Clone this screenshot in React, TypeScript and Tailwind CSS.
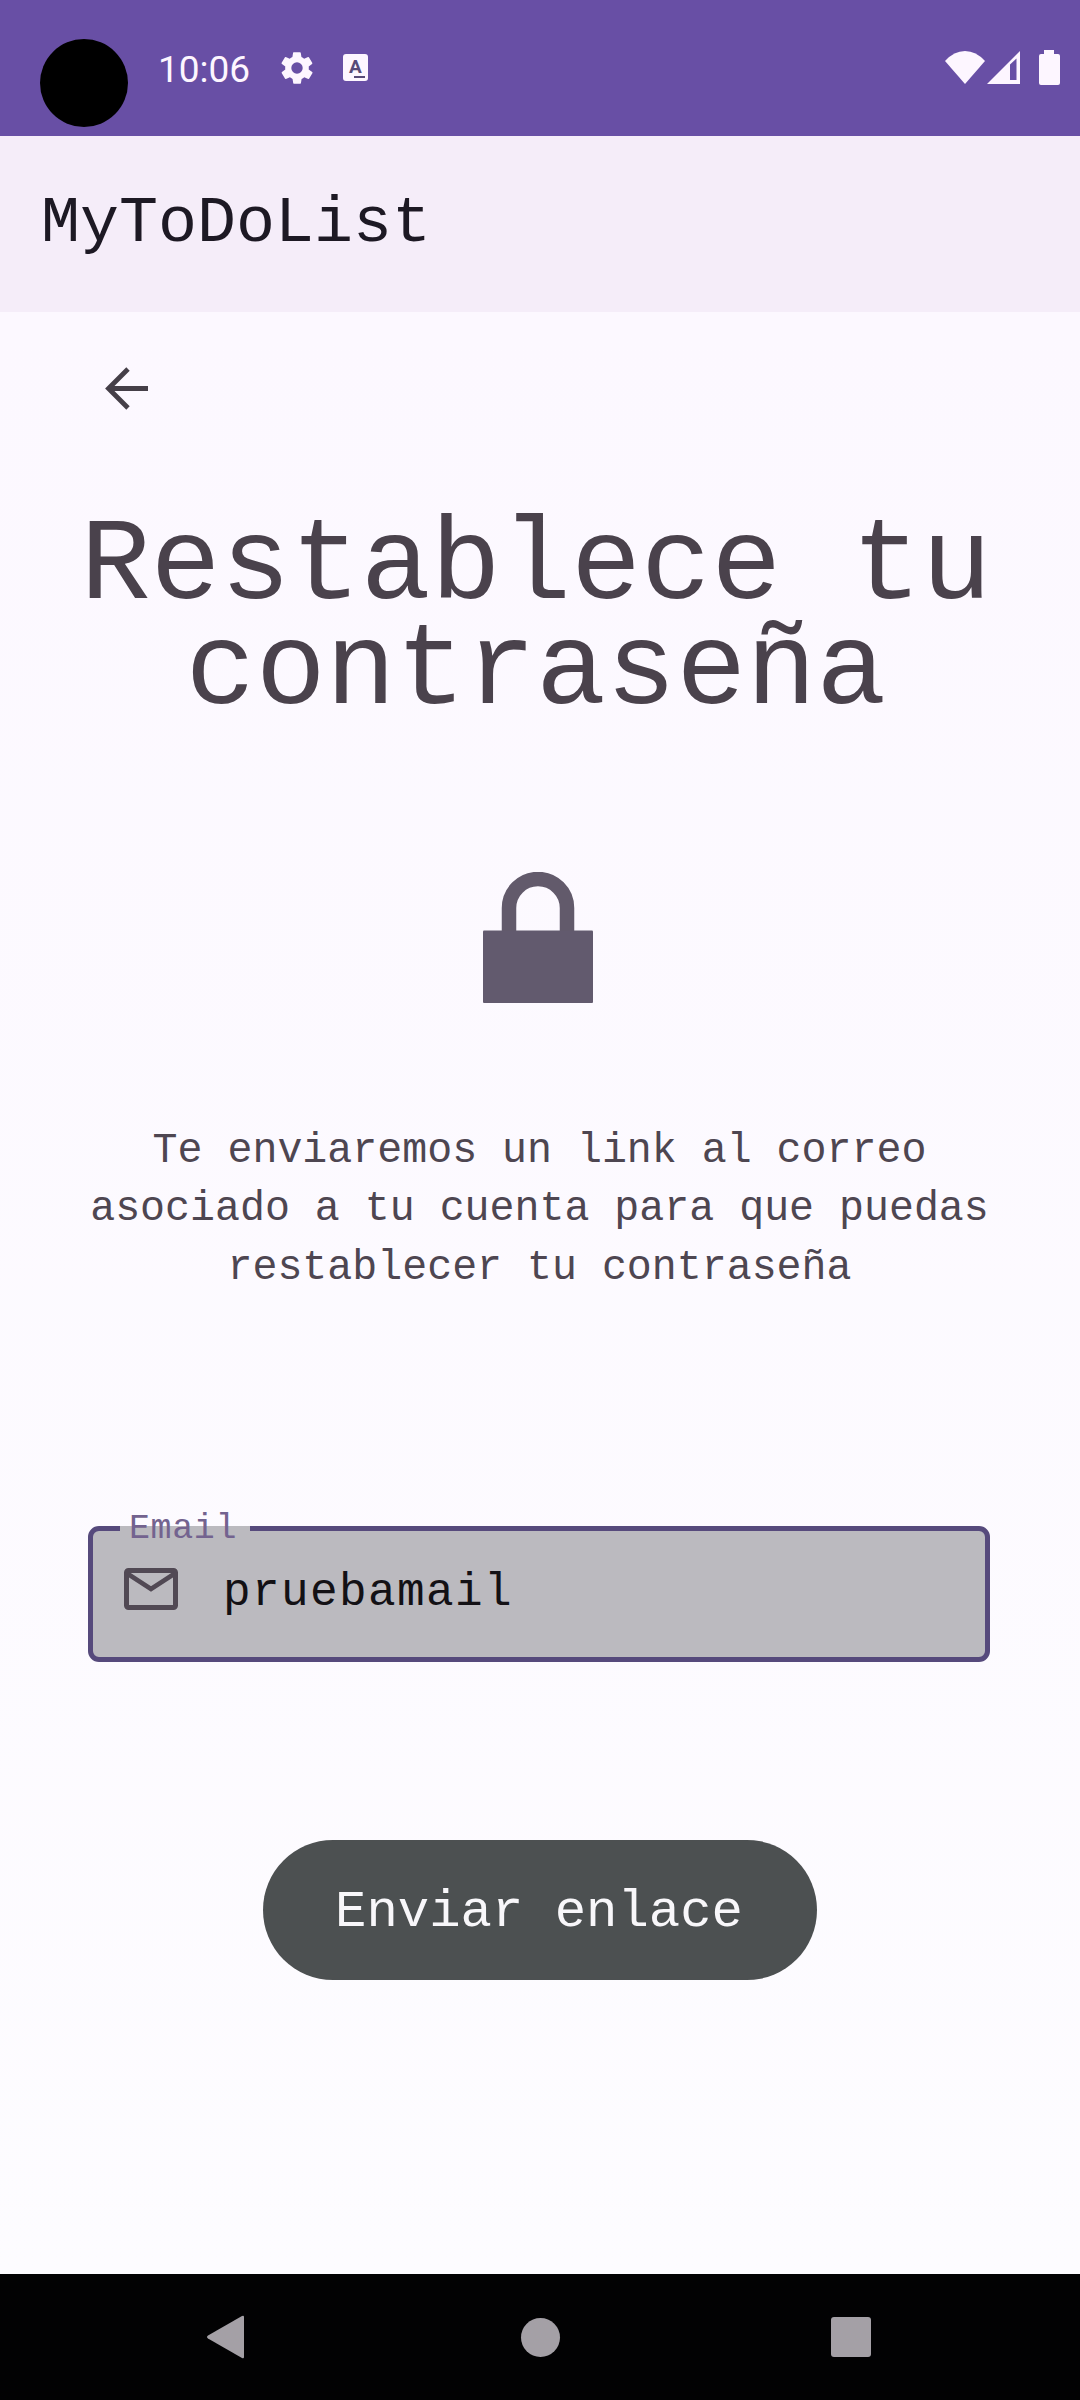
import React from "react";

function StatusBar() {
  return (
    <header className="flex h-[136px] shrink-0 items-start bg-[#684fa5] pl-10 pr-5 text-[#fdf6ff]">
      <span className="mt-[39px] h-[88px] w-[88px] rounded-full bg-black" />
      <span className="ml-[30px] mt-[50px] w-[94px] font-['Roboto'] text-[37px] leading-[40px]">10:06</span>
      <svg className="ml-[26px] mt-[49px] h-[38px] w-[38px]" viewBox="0 0 24 24" fill="currentColor">
        <path d="M19.4 13a7.5 7.5 0 0 0 0-2l2.1-1.6a.5.5 0 0 0 .1-.7l-2-3.4a.5.5 0 0 0-.6-.2l-2.500 1a7.300 7.300 0 0 0-1.700-1l-.4-2.600a.5.5 0 0 0-.5-.5h-4a.5.5 0 0 0-.4.5l-.4 2.600a7.700 7.700 0 0 0-1.700 1l-2.500-1a.5.5 0 0 0-.6.2l-2 3.400a.5.5 0 0 0 .2.700L4.600 11a6.300 6.300 0 0 0 0 2l-2.100 1.600a.5.5 0 0 0-.1.700l2 3.400c.1.200.3.300.6.200l2.500-1c.500.400 1.100.700 1.700 1l.4 2.600c0 .300.200.500.400.500h4c.300 0 .500-.200.500-.500l.4-2.600a7 7 0 0 0 1.700-1l2.500 1c.200.100.500 0 .600-.200l2-3.400a.5.5 0 0 0-.1-.700L19.400 13zM12 15.600a3.600 3.600 0 1 1 0-7.200 3.600 3.600 0 0 1 0 7.200z" />
      </svg>
      <span className="ml-[27px] mt-[54px] flex h-[27px] w-[25px] flex-col items-center rounded-[3px] bg-[#fdf6ff] font-['Roboto'] text-[19px] font-bold leading-[25px] text-[#574a78]">
        A
        <span className="-mt-[3px] ml-2 h-[2px] w-[11px] bg-[#574a78]" />
      </span>
      <svg className="ml-auto mt-[49px] h-9 w-[40px]" viewBox="0 0 40 36" fill="currentColor">
        <path d="M0 12Q9 2 20 2Q31 2 40 12L20 35Z" />
      </svg>
      <svg className="ml-[2px] mt-[51px] h-[34px] w-[34px]" viewBox="0 0 34 34" fill="currentColor" fillRule="evenodd">
        <path d="M0 33L33 0V33ZM23 13.500V29H29.500V7.500Z" />
      </svg>
      <svg className="ml-[18px] mt-[49px] h-9 w-[21px]" viewBox="0 0 21 36" fill="currentColor">
        <path d="M5 1H15V5H19Q21 5 21 7V34Q21 36 19 36H2Q0 36 0 34V7Q0 5 2 5H5Z" />
      </svg>
    </header>
  );
}

function EmailField() {
  return (
    <div className="relative ml-[88px] mt-[229px] flex h-[136px] w-[902px] shrink-0 items-center rounded-[11px] border-[5px] border-[#564a7c] bg-[#bbbabf]">
      <span className="absolute -top-[5px] left-[27px] h-[5px] w-[130px] bg-[#bbbabf]" />
      <label className="absolute -top-[21px] left-[36px] text-[35px] leading-[38px] tracking-[0.6px] text-[#73638f]">Email</label>
      <svg className="ml-[31px] mt-[-10px] h-[42px] w-[54px]" viewBox="0 0 54 42" fill="none" stroke="#514954" strokeWidth="5">
        <rect x="2.500" y="2.500" width="49" height="37" rx="2" />
        <path d="M4 6L27 21L50 6" strokeWidth="4.500" />
      </svg>
      <span className="-mt-px ml-[45px] text-[46px] leading-[56px] tracking-[1.400px] text-[#131115]">pruebamail</span>
    </div>
  );
}

export default function App() {
  return (
    <div className="flex h-[2400px] w-[1080px] flex-col overflow-hidden bg-[#fcf9ff] font-['Liberation_Mono',monospace]">
      <StatusBar />
      <div className="flex h-[176px] shrink-0 items-center bg-[#f5edf9] pl-[41px]">
        <h1 className="text-[65px] leading-none text-[#1d1924]">MyToDoList</h1>
      </div>
      <main className="flex flex-1 flex-col bg-linear-to-b from-[#fcf8ff] to-[#fdfcff]">
        <svg className="ml-[105px] mt-[55px] h-[43px] w-[44px] shrink-0" viewBox="0 0 44 43" fill="none" stroke="#453f48" strokeWidth="4.800">
          <path d="M43 21.500H4M23 2L3.500 21.500L23 41" />
        </svg>
        <h2 className="mt-[105px] pr-[8px] text-center text-[116.800px] leading-[105px] text-[#4a424c]">
          Restablece tu
          <br />
          contraseña
        </h2>
        <svg className="mx-auto mt-[147px] h-[131px] w-[110px] shrink-0 -translate-x-[2px]" viewBox="0 0 110 131">
          <path d="M26 62V36A29 29 0 0 1 84 36V62" fill="none" stroke="#625a6b" strokeWidth="14.500" />
          <rect y="58.500" width="110" height="72.500" rx="1" fill="#625a6e" />
        </svg>
        <p className="mt-[119px] pr-px text-center text-[41.600px] leading-[58.300px] text-[#4e4651]">
          Te enviaremos un link al correo
          <br />
          asociado a tu cuenta para que puedas
          <br />
          restablecer tu contraseña
        </p>
        <EmailField />
        <button className="mx-auto mt-[178px] h-[140px] w-[554px] shrink-0 rounded-full bg-[#4c5051] pr-[2px] pt-[4px] text-[52.300px] leading-none text-[#f8f7fa]">
          Enviar enlace
        </button>
      </main>
      <nav className="flex h-[126px] shrink-0 items-center bg-[#020203] pl-[206px] text-[#a4a0a6]">
        <svg className="h-[44px] w-[38px]" viewBox="0 0 38 44" fill="currentColor">
          <path d="M36 1Q38 0 38 2V42Q38 44 36 43L2 23.500Q0 22 2 20.500Z" />
        </svg>
        <span className="ml-[277px] h-[39px] w-[39px] rounded-full bg-[#a4a0a6]" />
        <span className="ml-[271px] h-[40px] w-[40px] rounded-[3px] bg-[#a4a0a6]" />
      </nav>
    </div>
  );
}
